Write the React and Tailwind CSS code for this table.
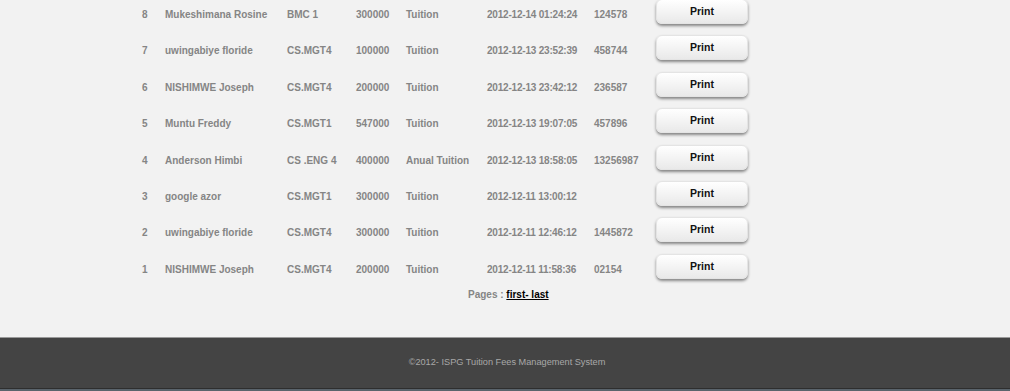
import React from "react";

const payments = [
  { no: 8, name: "Mukeshimana Rosine", cls: "BMC 1", amount: "300000", type: "Tuition", date: "2012-12-14 01:24:24", ref: "124578" },
  { no: 7, name: "uwingabiye floride", cls: "CS.MGT4", amount: "100000", type: "Tuition", date: "2012-12-13 23:52:39", ref: "458744" },
  { no: 6, name: "NISHIMWE Joseph", cls: "CS.MGT4", amount: "200000", type: "Tuition", date: "2012-12-13 23:42:12", ref: "236587" },
  { no: 5, name: "Muntu Freddy", cls: "CS.MGT1", amount: "547000", type: "Tuition", date: "2012-12-13 19:07:05", ref: "457896" },
  { no: 4, name: "Anderson Himbi", cls: "CS .ENG 4", amount: "400000", type: "Anual Tuition", date: "2012-12-13 18:58:05", ref: "13256987" },
  { no: 3, name: "google azor", cls: "CS.MGT1", amount: "300000", type: "Tuition", date: "2012-12-11 13:00:12", ref: "" },
  { no: 2, name: "uwingabiye floride", cls: "CS.MGT4", amount: "300000", type: "Tuition", date: "2012-12-11 12:46:12", ref: "1445872" },
  { no: 1, name: "NISHIMWE Joseph", cls: "CS.MGT4", amount: "200000", type: "Tuition", date: "2012-12-11 11:58:36", ref: "02154" },
];

const PrintButton = () => (
  <button className="mt-[3px] h-[25px] w-[92px] rounded-[6px] border border-[#e4e4e4] bg-gradient-to-b from-white to-[#e9e9e9] text-[10.5px] leading-[15px] font-bold text-[#111] shadow-[0_2px_3px_rgba(0,0,0,0.45)]">
    Print
  </button>
);

export default function App() {
  return (
    <div className="flex h-[391px] w-[1010px] flex-col overflow-hidden bg-[#f2f2f2] font-['Liberation_Sans',Arial,sans-serif]">
      <div className="-mt-[4px] pl-[142px]">
        {payments.map((p) => (
          <div key={p.no} className="flex h-[36.4px] text-[10px] leading-[15px] font-bold text-[#858585]">
            <div className="w-[23px] pt-[11px]">{p.no}</div>
            <div className="w-[122px] pt-[11px]">{p.name}</div>
            <div className="w-[69px] pt-[11px]">{p.cls}</div>
            <div className="w-[50px] pt-[11px]">{p.amount}</div>
            <div className="w-[81px] pt-[11px]">{p.type}</div>
            <div className="w-[107px] pt-[11px] tracking-[-0.2px]">{p.date}</div>
            <div className="w-[62px] pt-[11px]">{p.ref}</div>
            <div className="w-[92px]">
              <PrintButton />
            </div>
          </div>
        ))}
      </div>
      <div className="pl-[468px] text-[10px] leading-[15px] font-bold text-[#858585]">
        Pages :{" "}
        <a href="#" className="text-black underline">
          first- last
        </a>
      </div>
      <div className="mt-[35px] flex h-[51px] items-center justify-center border-t border-[#9a9a9a] bg-[#444444] pl-[4px] text-[9.2px] text-[#a8a8a8]">
        ©2012- ISPG Tuition Fees Management System
      </div>
      <div className="h-[3px] border-t border-[#2e2e2e] bg-[#5a646c]"></div>
    </div>
  );
}
